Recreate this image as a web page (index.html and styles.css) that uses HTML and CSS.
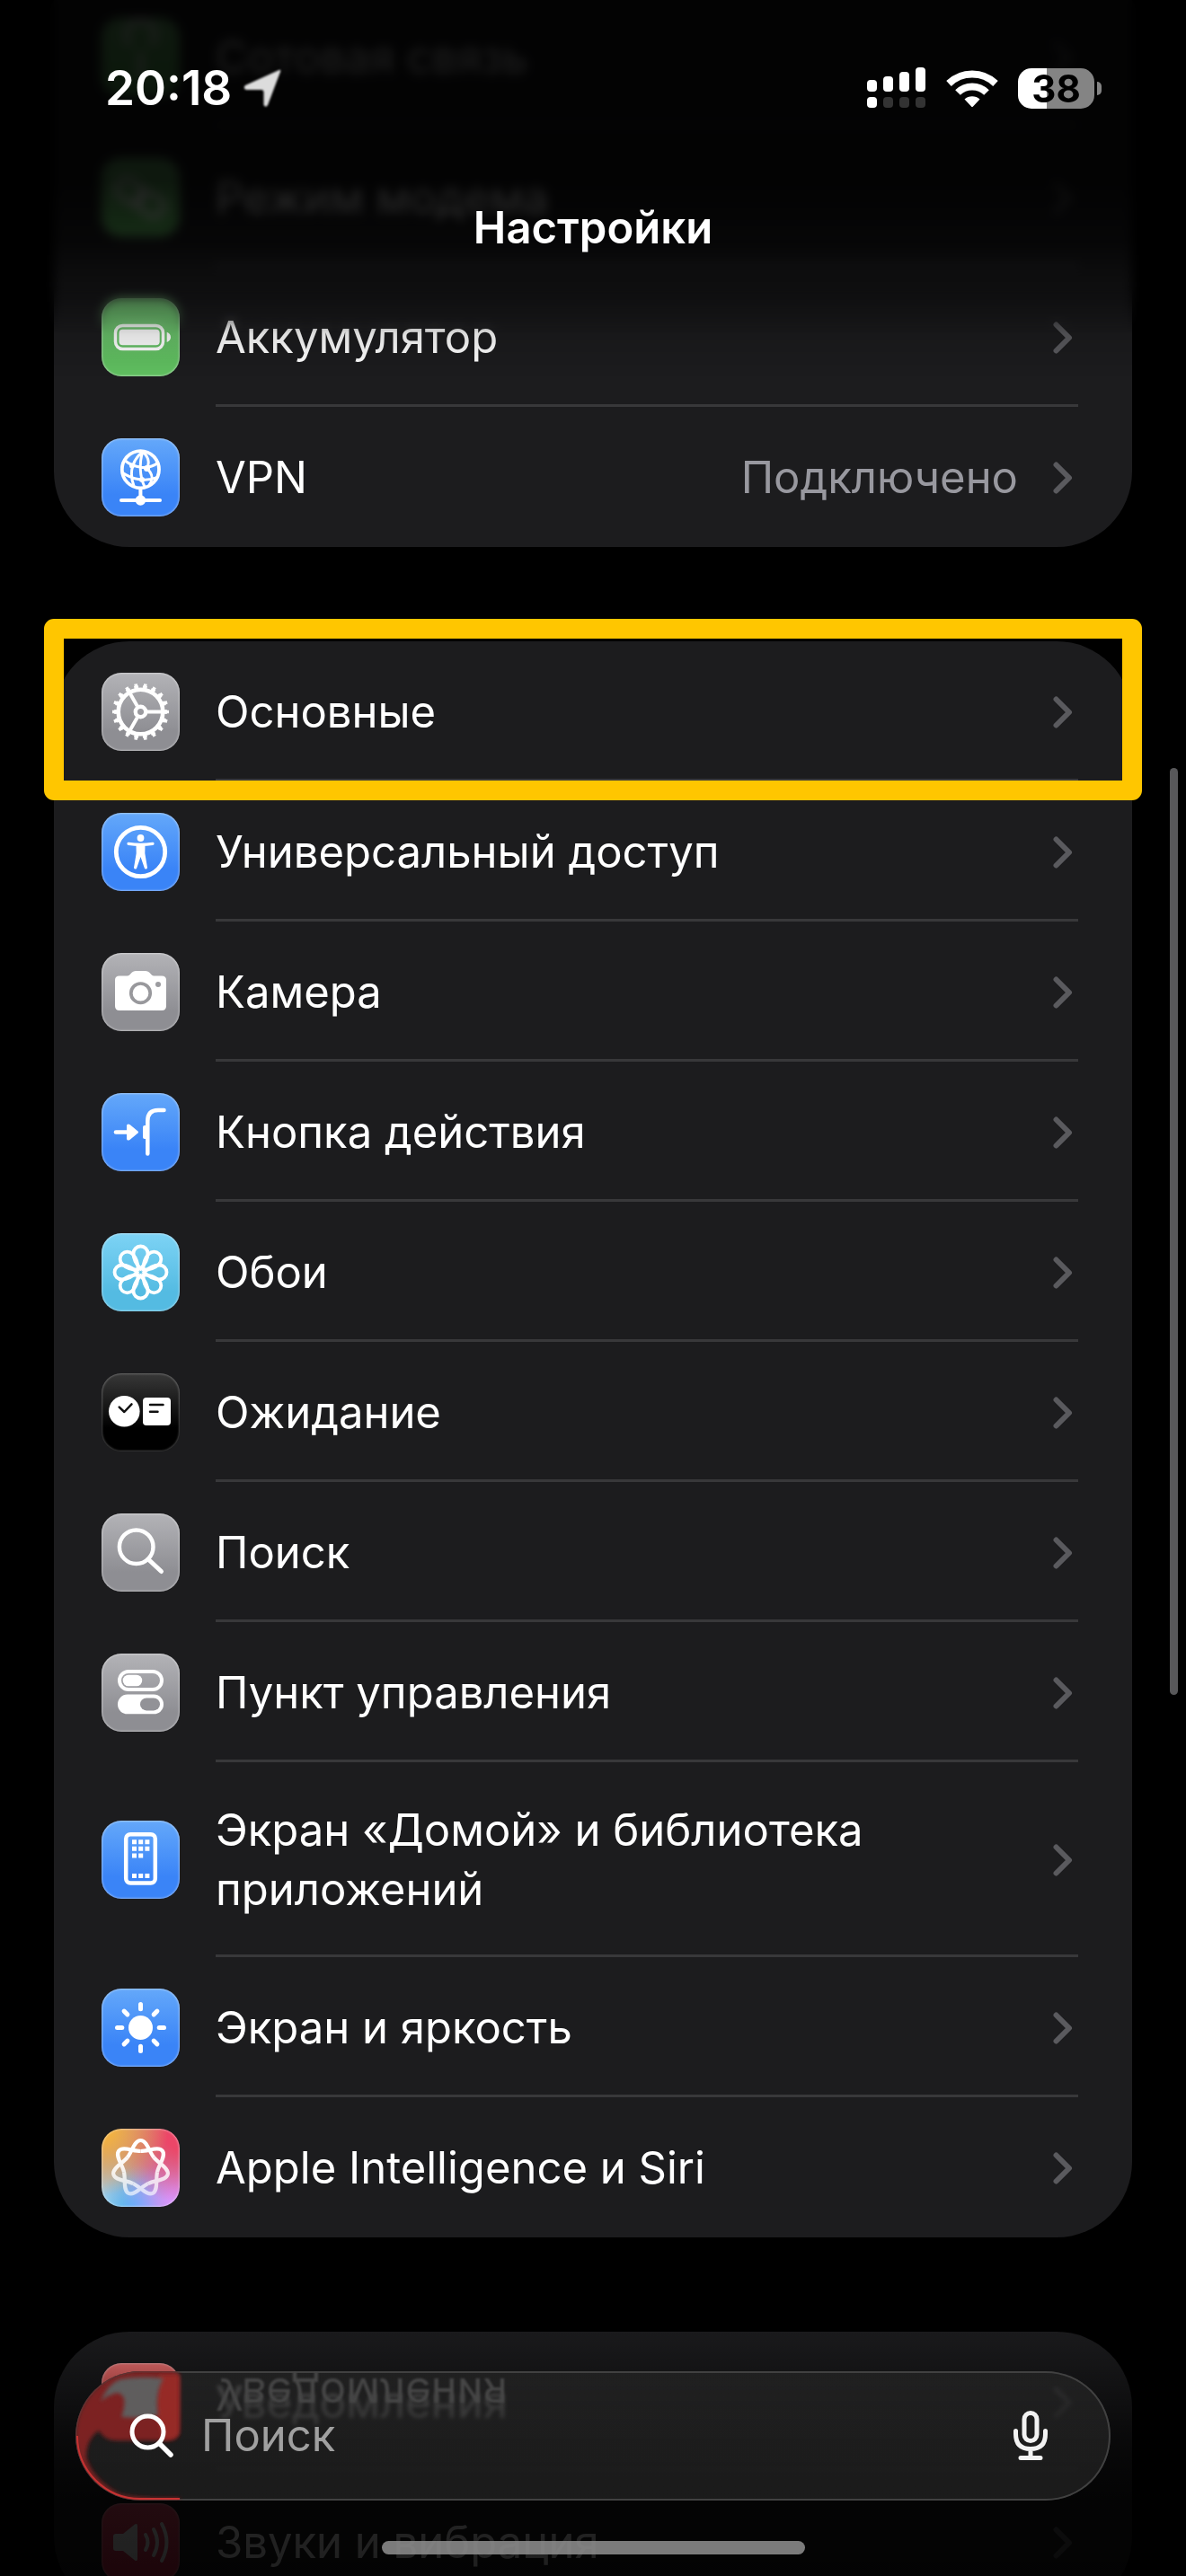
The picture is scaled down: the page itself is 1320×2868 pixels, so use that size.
FILE: index.html
```html
<!DOCTYPE html>
<html lang="ru">
<head>
<meta charset="utf-8">
<meta name="viewport" content="width=device-width, initial-scale=1">
<title>Настройки</title>
<link rel="stylesheet" href="styles.css">
</head>
<body>
<svg class="defs" aria-hidden="true">
  <symbol id="chevron" viewBox="0 0 22 36"><path d="M3.5 3.5L18 18L3.5 32.5" fill="none" stroke="currentColor" stroke-width="6" stroke-linecap="round" stroke-linejoin="round"/></symbol>
  <symbol id="lens" viewBox="0 0 50 50"><circle cx="20.500" cy="20.500" r="17.500" fill="none" stroke="currentColor" stroke-width="5"/><path d="M33.500 33.500L46 46" stroke="currentColor" stroke-width="5.500" stroke-linecap="round"/></symbol>
  <path id="petal" d="M0-4C-5-9-8-15-8-21A8 8 0 0 1 8-21C8-15 5-9 0-4Z"/>
  <path id="loop" d="M-14.850-11.850C-9.250-18.900-7-31 0-31S9.250-18.900 14.850-11.850"/>
  <path id="ray" d="M0-20.700V-26"/>
</svg>

<div class="screen">
  <header class="topbar">
    <div class="status">
      <div class="status-side">
        <span class="clock">20:18</span>
        <svg class="location" viewBox="0 0 44 44"><path d="M40.500 2Q43 1 42 4L28 41Q26 44.500 23.500 41V26Q23 24 21 24H4Q0 22 3 19Z" fill="#dcdcdc"/></svg>
      </div>
      <div class="status-side status-right">
        <svg class="signal" viewBox="0 0 66 46" fill="#fff"><rect y="14" width="11" height="13" rx="4"/><rect x="18" y="10" width="11" height="17" rx="4"/><rect x="36" y="5" width="11" height="22" rx="4"/><rect x="54" width="11" height="27" rx="4"/><rect y="33" width="11" height="12" rx="4"/><g fill="#333"><rect x="18" y="33" width="11" height="12" rx="4"/><rect x="36" y="33" width="11" height="12" rx="4"/><rect x="54" y="33" width="11" height="12" rx="4"/></g></svg>
        <svg class="wifi" viewBox="0 0 58 44"><g fill="none" stroke="#fff" stroke-width="8"><path d="M3 17A37.500 37.500 0 0 1 55 17"/><path d="M13 27A22.700 22.700 0 0 1 45 27"/></g><path d="M20.500 34.500A13 13 0 0 1 37.500 34.500L30 42.500Q29 43.500 28 42.500Z" fill="#fff"/></svg>
        <div class="battery"><span class="battery-body">38</span><span class="battery-cap"></span></div>
      </div>
    </div>
    <h1 class="title">Настройки</h1>
  </header>

  <main class="content">
    <nav class="group group-first" aria-label="Связь и питание">
      <a class="row" href="#cellular"><svg class="icon green" viewBox="0 0 87 87"><path d="M43.500 38V68M32 30A16 16 0 1 1 55 30" fill="none" stroke="#fff" stroke-width="5"/></svg><span class="body"><span class="label">Сотовая связь</span><svg class="chevron"><use href="#chevron"/></svg></span></a>
      <a class="row" href="#hotspot"><svg class="icon green" viewBox="0 0 87 87"><g fill="none" stroke="#fff" stroke-width="5"><rect x="16" y="26" width="32" height="22" rx="11" transform="rotate(35 32 37)"/><rect x="38" y="40" width="32" height="22" rx="11" transform="rotate(35 54 51)"/></g></svg><span class="body"><span class="label">Режим модема</span><svg class="chevron"><use href="#chevron"/></svg></span></a>
      <a class="row" href="#battery"><svg class="icon green" viewBox="0 0 87 87"><rect x="15.500" y="30.500" width="53" height="26" rx="8" fill="none" stroke="#fff" stroke-width="3.500"/><rect x="19.500" y="34.800" width="45.200" height="17.400" rx="4" fill="#fff"/><path d="M72.700 37.800Q77 39.500 77 43.400T72.700 49Z" fill="#fff"/></svg><span class="body"><span class="label">Аккумулятор</span><svg class="chevron"><use href="#chevron"/></svg></span></a>
      <a class="row" href="#vpn"><svg class="icon blue" viewBox="0 0 87 87"><g fill="none" stroke="#fff" stroke-width="3"><circle cx="43.400" cy="34.700" r="20.600" stroke-width="3.800"/><path d="M46 15C42 25 42 42 48 54M46 15C35 23 30 37 36 53M46 15C54 22 53 30 50 34M25 24C36 33 52 36 63 27M23 38C34 46 50 49 63 43M50 33C58 40 57 47 53 52"/><path d="M43.400 57V68" stroke-width="4"/><path d="M22 69H65" stroke-width="4" stroke-linecap="round"/></g><g fill="#fff"><circle cx="43.400" cy="69" r="5.800"/><circle cx="34" cy="30.500" r="3"/><circle cx="50.500" cy="33.500" r="3.500"/><circle cx="45" cy="46" r="3"/></g></svg><span class="body"><span class="label">VPN</span><span class="value">Подключено</span><svg class="chevron"><use href="#chevron"/></svg></span></a>
    </nav>

    <nav class="group" aria-label="Основные настройки">
      <a class="row highlighted" href="#general"><svg class="icon gray" viewBox="0 0 87 87"><g fill="none" stroke="#fff"><circle cx="43.500" cy="43.500" r="24.800" stroke-width="4.600"/><circle cx="43.500" cy="43.500" r="27.800" stroke-width="3" pathLength="180" stroke-dasharray="5 5" stroke-dashoffset="2.500"/><circle cx="43.500" cy="43.500" r="30" stroke-width="3" pathLength="180" stroke-dasharray="3.400 6.600" stroke-dashoffset="1.700"/><circle cx="43.500" cy="43.500" r="5.700" stroke-width="4.400"/><path d="M51 43.500H67M39.700 36.900L32 23.600M39.700 50.100L32 63.400" stroke-width="4"/></g></svg><span class="body"><span class="label">Основные</span><svg class="chevron"><use href="#chevron"/></svg></span></a>
      <a class="row" href="#accessibility"><svg class="icon blue" viewBox="0 0 87 87"><circle cx="43.500" cy="43.500" r="27.200" fill="none" stroke="#fff" stroke-width="4.800"/><circle cx="43.500" cy="28" r="3.900" fill="#fff"/><path d="M30 34.300Q43.500 36.500 57 34.300" fill="none" stroke="#fff" stroke-width="3.200" stroke-linecap="round"/><path d="M38.500 35H48.500L48.300 45L51 61Q50.500 63.500 48 62L43.500 49L39 62Q36.500 63.500 36 61L38.700 45Z" fill="#fff"/></svg><span class="body"><span class="label">Универсальный доступ</span><svg class="chevron"><use href="#chevron"/></svg></span></a>
      <a class="row" href="#camera"><svg class="icon gray" viewBox="0 0 87 87"><path d="M20 25.500H29Q31 25 32.500 23L34 21.500Q35.500 20 38 20H49Q51.500 20 53 21.500L54.500 23Q56 25 58 25.500H67Q72 25.500 72 30V59Q72 64 67 64H20Q15 64 15 59V30Q15 25.500 20 25.500Z" fill="#fff"/><circle cx="43.500" cy="44.700" r="10.700" fill="none" stroke="#98989c" stroke-width="3.700"/><circle cx="63" cy="35" r="3" fill="#9c9ca0"/></svg><span class="body"><span class="label">Камера</span><svg class="chevron"><use href="#chevron"/></svg></span></a>
      <a class="row" href="#action-button"><svg class="icon blue" viewBox="0 0 87 87"><path d="M16 43.500H30" stroke="#fff" stroke-width="4.600" stroke-linecap="round"/><path d="M28 36Q28.500 33.500 31.500 35L40.500 42.500Q41.500 43.500 40.500 44.500L31.500 52Q28.500 53.500 28 51Z" fill="#fff"/><path d="M51.300 67.500V31Q51.300 19 63 19H69.500" fill="none" stroke="#fff" stroke-width="4.500" stroke-linecap="round"/><rect x="46" y="36" width="5" height="15" rx="2" fill="#fff"/></svg><span class="body"><span class="label">Кнопка действия</span><svg class="chevron"><use href="#chevron"/></svg></span></a>
      <a class="row" href="#wallpaper"><svg class="icon cyan" viewBox="0 0 87 87"><g transform="translate(43.500 43.500)" fill="none" stroke="#fff" stroke-width="3.800"><use href="#petal"/><use href="#petal" transform="rotate(45)"/><use href="#petal" transform="rotate(90)"/><use href="#petal" transform="rotate(135)"/><use href="#petal" transform="rotate(180)"/><use href="#petal" transform="rotate(225)"/><use href="#petal" transform="rotate(270)"/><use href="#petal" transform="rotate(315)"/></g></svg><span class="body"><span class="label">Обои</span><svg class="chevron"><use href="#chevron"/></svg></span></a>
      <a class="row" href="#standby"><svg class="icon black" viewBox="0 0 87 87"><circle cx="25.300" cy="42.300" r="17.300" fill="#fff"/><rect x="46" y="27" width="31" height="31" rx="4" fill="#fff"/><g fill="none" stroke="#111" stroke-width="2.500" stroke-linecap="round" stroke-linejoin="round"><path d="M19.700 37.700L25.300 43L33.500 34.300M54 35H68.500M54 42.700H62.500"/></g></svg><span class="body"><span class="label">Ожидание</span><svg class="chevron"><use href="#chevron"/></svg></span></a>
      <a class="row" href="#search"><svg class="icon gray" viewBox="0 0 87 87"><circle cx="38.700" cy="37.200" r="18.800" fill="none" stroke="#fff" stroke-width="4.500"/><path d="M52 51L66.500 64.500" stroke="#fff" stroke-width="5" stroke-linecap="round"/></svg><span class="body"><span class="label">Поиск</span><svg class="chevron"><use href="#chevron"/></svg></span></a>
      <a class="row" href="#control-center"><svg class="icon gray" viewBox="0 0 87 87"><rect x="20" y="20" width="47" height="20" rx="10" fill="none" stroke="#fff" stroke-width="4"/><rect x="23.700" y="23.700" width="21.500" height="12.600" rx="6.300" fill="#fff"/><rect x="18" y="45.600" width="51" height="21.700" rx="10.800" fill="#fff"/><rect x="43" y="49.400" width="22" height="14" rx="7" fill="#929297"/></svg><span class="body"><span class="label">Пункт управления</span><svg class="chevron"><use href="#chevron"/></svg></span></a>
      <a class="row" href="#home-screen"><svg class="icon blue" viewBox="0 0 87 87"><rect x="27.200" y="15.200" width="32.600" height="54.300" rx="5" fill="none" stroke="#fff" stroke-width="4.500"/><path d="M34 23.700H39M41.200 23.700H46.200M48.400 23.700H53.400M34 31.300H39M41.200 31.300H46.200M48.400 31.300H53.400M34 39H39M41.200 39H46.200M34 61.500H39M41.200 61.500H46.200M48.400 61.500H53.400" stroke="#fff" stroke-width="5"/></svg><span class="body"><span class="label">Экран «Домой» и библиотека приложений</span><svg class="chevron"><use href="#chevron"/></svg></span></a>
      <a class="row" href="#display"><svg class="icon blue" viewBox="0 0 87 87"><g transform="translate(43.500 43.500)" stroke="#fff" stroke-width="5" stroke-linecap="round"><circle r="13.500" fill="#fff" stroke="none"/><use href="#ray"/><use href="#ray" transform="rotate(45)"/><use href="#ray" transform="rotate(90)"/><use href="#ray" transform="rotate(135)"/><use href="#ray" transform="rotate(180)"/><use href="#ray" transform="rotate(225)"/><use href="#ray" transform="rotate(270)"/><use href="#ray" transform="rotate(315)"/></g></svg><span class="body"><span class="label">Экран и яркость</span><svg class="chevron"><use href="#chevron"/></svg></span></a>
      <a class="row" href="#siri"><svg class="icon siri" viewBox="0 0 87 87"><defs><linearGradient id="siri-fade" x1="0" y1="0" x2="0" y2="87" gradientUnits="userSpaceOnUse"><stop offset=".3" stop-color="#fff"/><stop offset=".9" stop-color="#fff" stop-opacity=".6"/></linearGradient><mask id="siri-mask"><rect width="87" height="87" fill="url(#siri-fade)"/></mask></defs><g mask="url(#siri-mask)"><g transform="translate(43.500 44)" fill="none" stroke="#fff" stroke-width="4.200"><use href="#loop"/><use href="#loop" transform="rotate(51.429)"/><use href="#loop" transform="rotate(102.857)"/><use href="#loop" transform="rotate(154.286)"/><use href="#loop" transform="rotate(205.714)"/><use href="#loop" transform="rotate(257.143)"/><use href="#loop" transform="rotate(308.571)"/></g></g></svg><span class="body"><span class="label">Apple Intelligence и Siri</span><svg class="chevron"><use href="#chevron"/></svg></span></a>
    </nav>

    <nav class="group" aria-label="Уведомления и звуки">
      <a class="row" href="#notifications"><svg class="icon red" viewBox="0 0 87 87"></svg><span class="body"><span class="label">Уведомления</span><svg class="chevron"><use href="#chevron"/></svg></span></a>
      <a class="row" href="#sounds"><svg class="icon pink" viewBox="0 0 87 87"><path d="M16 34H24L37 23.500Q40 22 40 25V62Q40 65 37 63.500L24 53H16Q13 53 13 50V37Q13 34 16 34Z" fill="#fff"/><g fill="none" stroke="#fff" stroke-width="4" stroke-linecap="round"><path d="M49 35Q54 43.500 49 52M58 29Q66 43.500 58 58M67 23Q78 43.500 67 64"/></g></svg><span class="body"><span class="label">Звуки и вибрация</span><svg class="chevron"><use href="#chevron"/></svg></span></a>
    </nav>
  </main>

  <div class="scrollbar"></div>

  <footer class="bottombar">
    <form class="search" role="search">
      <svg class="refraction" viewBox="0 0 144 144" aria-hidden="true">
        <defs><filter id="soft" x="-20%" y="-20%" width="140%" height="140%"><feGaussianBlur stdDeviation="2"/></filter></defs>
        <path d="M72 0H108Q116 0 116 10V64Q116 77 103 77H44Q32 77 26 66Q12 76 12 96Q20 122 50 137Q70 142 116 141V144H72A72 72 0 0 1 72 0Z" fill="#7c2120" filter="url(#soft)"/>
        <path d="M94 4H115V70Q110 77 98 76Q86 40 94 4Z" fill="#962926" filter="url(#soft)"/>
        <path d="M28 34Q36 14 50 9Q72 5 98 8Q88 24 92 49Q76 53 51 51Q60 26 46 24Q36 26 28 34Z" fill="#5e5d5d" filter="url(#soft)"/>
        <path d="M2 72A70 70 0 0 0 72 142H116" fill="none" stroke="#c83232" stroke-width="2"/>
      </svg>
      <span class="mirror" aria-hidden="true">Уведомления</span>
      <label class="search-label" for="query" aria-label="Поиск"><svg class="search-icon"><use href="#lens"/></svg></label>
      <input class="search-input" id="query" type="search" placeholder="Поиск">
      <button class="mic" type="button" aria-label="Диктовка"><svg viewBox="0 0 38 56" fill="none" stroke="currentColor" stroke-width="5" stroke-linecap="round"><rect x="12" y="2.500" width="14" height="31" rx="7"/><path d="M2.500 22.500V26Q2.500 42.500 19 42.500T35.500 26V22.500M19 43V52M8 52.500H30"/></svg></button>
    </form>
    <div class="home-indicator"></div>
  </footer>
</div>
</body>
</html>
```

FILE: styles.css
```css
* {
  box-sizing: border-box;
}

body {
  margin: 0;
  background: #000;
  color: #fff;
  font-family: Inter, "Liberation Sans", sans-serif;
  font-size: 49px;
  line-height: 66px;
}

.defs {
  position: absolute;
  width: 0;
  height: 0;
}

.screen {
  position: relative;
  height: 100vh;
  overflow: hidden;
}

/* Top bar floats over the scrolled list and fades it out */
.topbar {
  position: absolute;
  inset: 0 0 auto;
  z-index: 2;
  padding: 65px 0 133px;
}

.topbar::before,
.topbar::after {
  content: "";
  position: absolute;
  inset: 0;
  z-index: -1;
}

.topbar::before {
  backdrop-filter: blur(6px);
  mask-image: linear-gradient(#000 76%, transparent 88%);
}

.topbar::after {
  background: linear-gradient(rgb(0 0 0 / 88%) 48%, rgb(0 0 0 / 76%) 64%, rgb(0 0 0 / 56%) 72%, rgb(0 0 0 / 40%) 80%, rgb(0 0 0 / 12%) 89%, transparent);
}

.status {
  display: flex;
  justify-content: space-between;
  align-items: center;
  height: 66px;
  padding: 0 94px 0 117px;
}

.status-side {
  display: flex;
  align-items: center;
  gap: 12px;
}

.status-right {
  gap: 22px;
}

.clock {
  font-size: 53px;
  font-weight: 600;
}

.location {
  width: 44px;
  height: 44px;
  filter: blur(1px);
}

.signal {
  width: 66px;
  height: 46px;
}

.wifi {
  width: 58px;
  height: 44px;
}

.battery {
  display: flex;
  align-items: center;
  gap: 3px;
}

.battery-body {
  width: 85px;
  height: 45px;
  border-radius: 15px;
  background: linear-gradient(90deg, #fff 38%, #848484 38%);
  color: #000;
  font-size: 42px;
  font-weight: 700;
  line-height: 45px;
  text-align: center;
}

.battery-cap {
  width: 5px;
  height: 15px;
  border-radius: 0 8px 8px 0;
  background: #848484;
}

.title {
  margin: 90px 0 0;
  font-size: 49px;
  font-weight: 600;
  text-align: center;
}

/* The list is scrolled a little past its first row */
.content {
  display: flex;
  flex-direction: column;
  gap: 105px;
  margin-top: -15px;
  padding: 0 60px;
}

.group {
  border-radius: 84px;
  background: #1c1c1e;
}

.group-first {
  border-top-left-radius: 0;
  border-top-right-radius: 0;
}

.row {
  position: relative;
  display: flex;
  align-items: center;
  gap: 40px;
  padding: 0 60px 0 53px;
  color: inherit;
  text-decoration: none;
}

.body {
  flex: 1;
  display: flex;
  align-items: center;
  gap: 39px;
  min-height: 156px;
  padding: 43px 6px 42px 0;
  box-shadow: inset 0 -3px #38383a;
}

.row:last-child .body {
  box-shadow: none;
}

.label {
  flex: 1;
}

.value {
  color: #98989f;
}

.chevron {
  width: 22px;
  height: 36px;
  color: #5a5a5e;
}

.highlighted::after {
  content: "";
  position: absolute;
  inset: -25px -11px -21px;
  z-index: 1;
  border: 22px solid #ffc600;
  border-radius: 11px;
}

.icon {
  width: 87px;
  height: 87px;
  border-radius: 22px;
  box-shadow: inset 0 0 2px 1px rgb(255 255 255 / 40%);
}

.green {
  background: linear-gradient(#78c87a, #60bf60 80%);
}

.blue {
  background: linear-gradient(#64a8fa, #3a84f7 72%);
}

.gray {
  background: linear-gradient(#b3b3b7, #8e8e93 75%);
}

.cyan {
  background: linear-gradient(#7dd3f5, #54bbe2 75%);
}

.black {
  background: linear-gradient(#383838, #000 70%);
  box-shadow: inset 0 0 2px 1px rgb(255 255 255 / 25%);
}

.red {
  background: linear-gradient(#ff7878, #eb4b46 75%);
}

.pink {
  background: linear-gradient(#f5506e, #e62850);
}

.siri {
  background:
    radial-gradient(circle at 0 0, #f2b142 10%, transparent 60%),
    radial-gradient(circle at 100% 10%, #ec4668 12%, transparent 62%),
    radial-gradient(circle at 100% 90%, #d694fa 10%, transparent 55%),
    radial-gradient(circle at 50% 105%, #4db4f8 10%, transparent 50%),
    radial-gradient(circle at 0 100%, #a8d0e4 10%, transparent 55%),
    #b58a98;
}

.scrollbar {
  position: absolute;
  top: 855px;
  right: 9px;
  width: 9px;
  height: 36%;
  border-radius: 5px;
  background: #58585a;
}

/* Bottom bar floats over the end of the list */
.bottombar {
  position: absolute;
  inset: auto 0 0;
  display: flex;
  flex-direction: column;
  align-items: center;
  gap: 45px;
  padding: 60px 84px 24px;
  background: linear-gradient(transparent, rgb(0 0 0 / 30%) 21%, rgb(0 0 0 / 70%) 50%, rgb(0 0 0 / 86%) 70%, rgb(0 0 0 / 88%));
}

.search {
  position: relative;
  display: flex;
  align-items: center;
  gap: 30px;
  width: 100%;
  height: 144px;
  padding: 0 70px 0 60px;
  border-radius: 72px;
  background: linear-gradient(rgb(38 38 38 / 70%), rgb(36 36 36 / 76%) 40%, rgb(28 28 28 / 96%));
  backdrop-filter: blur(2px);
  box-shadow: inset 0 0 0 2px #414141;
  overflow: hidden;
}

.refraction {
  position: absolute;
  top: 0;
  left: 0;
  width: 144px;
  height: 144px;
}

/* Upside-down reflection of the row under the glass edge */
.mirror {
  position: absolute;
  top: 0;
  left: 156px;
  color: #464646;
  line-height: 50px;
  filter: blur(1px);
  transform: rotateX(180deg);
}

.search-label,
.search-input,
.mic {
  position: relative;
}

.search-icon {
  display: block;
  width: 50px;
  height: 50px;
}

.search-input {
  flex: 1;
  min-width: 0;
  padding: 0;
  border: 0;
  outline: 0;
  background: none;
  color: #fff;
  font: inherit;
}

.search-input::placeholder {
  color: #a0a0a0;
  opacity: 1;
}

.mic {
  width: 38px;
  height: 56px;
  padding: 0;
  border: 0;
  background: none;
  color: #f2f2f2;
}

.mic svg {
  display: block;
}

.home-indicator {
  width: 471px;
  height: 15px;
  border-radius: 8px;
  background: rgb(140 140 140 / 88%);
}
```
